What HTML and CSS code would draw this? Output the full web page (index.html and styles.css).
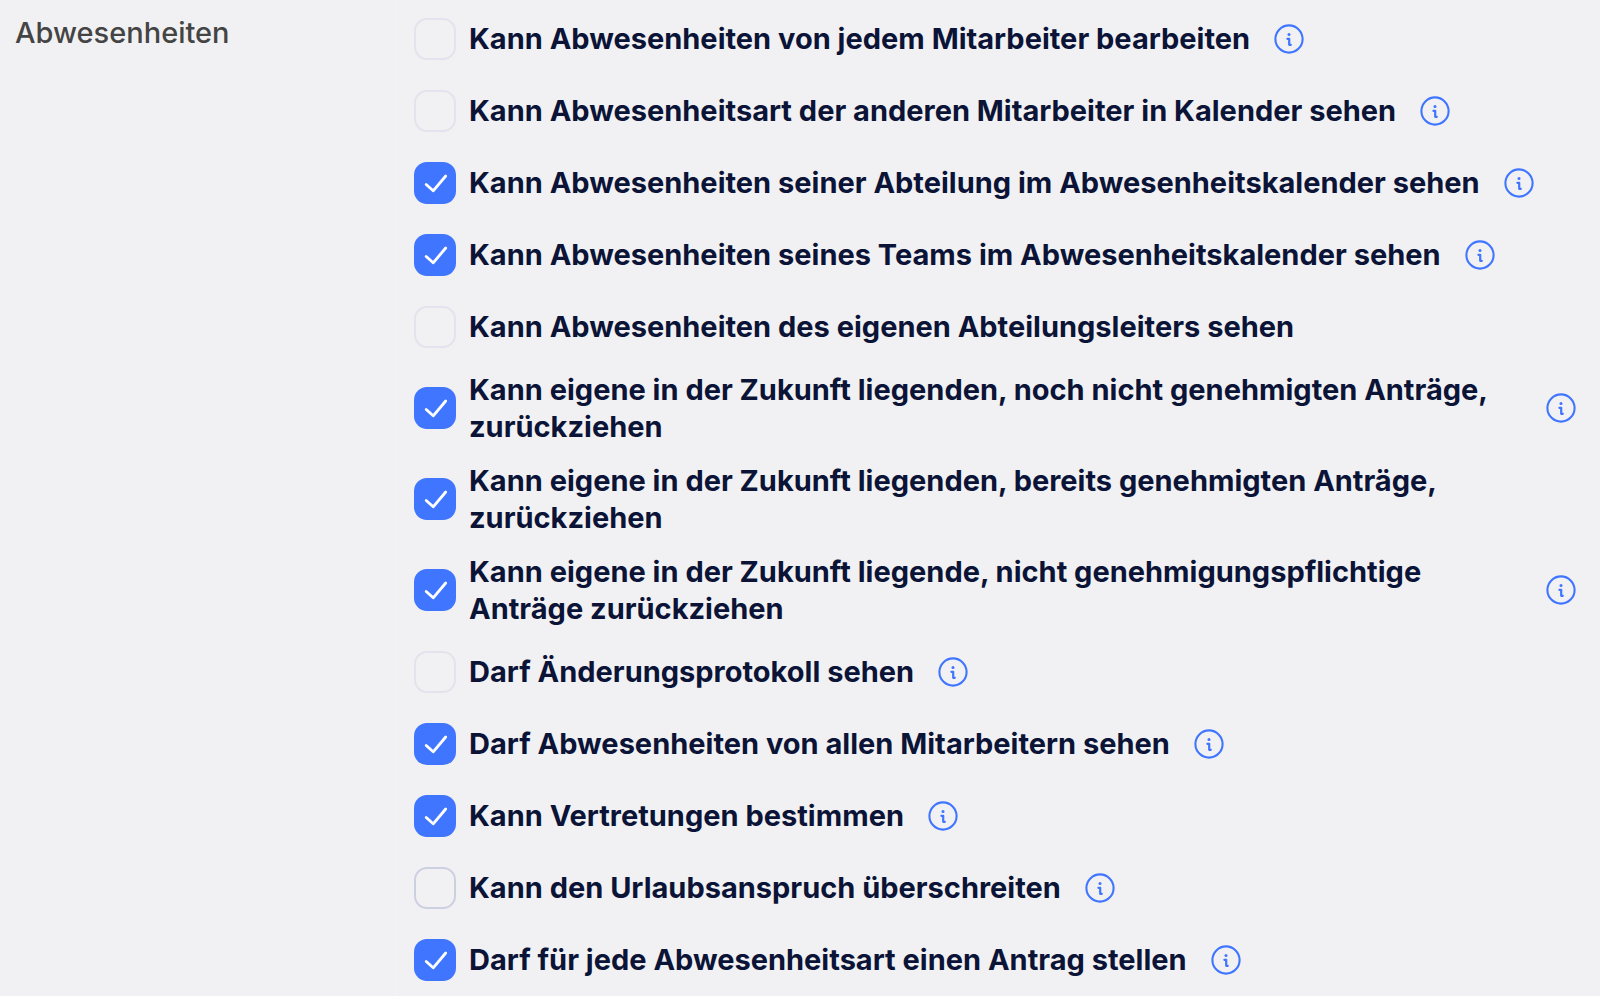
FILE: index.html
```html
<!DOCTYPE html>
<html lang="de">
<head>
	<meta charset="utf-8">
	<title>Abwesenheiten</title>
	<link rel="stylesheet" href="styles.css">
</head>
<body>
	<!-- Icon, wird von allen Info-Buttons verwendet -->
	<svg class="sprite" aria-hidden="true">
		<symbol id="info" viewBox="0 0 30 30">
			<circle cx="15" cy="15" r="13.6" fill="none" stroke="currentColor" stroke-width="2.1"/>
			<circle cx="15" cy="10.6" r="1.5" fill="currentColor"/>
			<path d="M13.4 14.8h1.8v6h1.6" fill="none" stroke="currentColor" stroke-width="2.2" stroke-linecap="round" stroke-linejoin="round"/>
		</symbol>
	</svg>

	<div class="permissions">
		<div class="group-name">Abwesenheiten</div>
		<div class="list">
			<div class="row">
				<input type="checkbox" id="p1">
				<label for="p1">Kann Abwesenheiten von jedem Mitarbeiter bearbeiten</label>
				<button type="button" class="info" aria-label="Info"><svg><use href="#info"/></svg></button>
			</div>
			<div class="row">
				<input type="checkbox" id="p2">
				<label for="p2">Kann Abwesenheitsart der anderen Mitarbeiter in Kalender sehen</label>
				<button type="button" class="info" aria-label="Info"><svg><use href="#info"/></svg></button>
			</div>
			<div class="row">
				<input type="checkbox" id="p3" checked>
				<label for="p3">Kann Abwesenheiten seiner Abteilung im Abwesenheitskalender sehen</label>
				<button type="button" class="info" aria-label="Info"><svg><use href="#info"/></svg></button>
			</div>
			<div class="row">
				<input type="checkbox" id="p4" checked>
				<label for="p4">Kann Abwesenheiten seines Teams im Abwesenheitskalender sehen</label>
				<button type="button" class="info" aria-label="Info"><svg><use href="#info"/></svg></button>
			</div>
			<div class="row">
				<input type="checkbox" id="p5">
				<label for="p5">Kann Abwesenheiten des eigenen Abteilungsleiters sehen</label>
			</div>
			<div class="row">
				<input type="checkbox" id="p6" checked>
				<label for="p6">Kann eigene in der Zukunft liegenden, noch nicht genehmigten Anträge, zurückziehen</label>
				<button type="button" class="info" aria-label="Info"><svg><use href="#info"/></svg></button>
			</div>
			<div class="row">
				<input type="checkbox" id="p7" checked>
				<label for="p7">Kann eigene in der Zukunft liegenden, bereits genehmigten Anträge, zurückziehen</label>
			</div>
			<div class="row">
				<input type="checkbox" id="p8" checked>
				<label for="p8">Kann eigene in der Zukunft liegende, nicht genehmigungspflichtige Anträge zurückziehen</label>
				<button type="button" class="info" aria-label="Info"><svg><use href="#info"/></svg></button>
			</div>
			<div class="row">
				<input type="checkbox" id="p9">
				<label for="p9">Darf Änderungsprotokoll sehen</label>
				<button type="button" class="info" aria-label="Info"><svg><use href="#info"/></svg></button>
			</div>
			<div class="row">
				<input type="checkbox" id="p10" checked>
				<label for="p10">Darf Abwesenheiten von allen Mitarbeitern sehen</label>
				<button type="button" class="info" aria-label="Info"><svg><use href="#info"/></svg></button>
			</div>
			<div class="row">
				<input type="checkbox" id="p11" checked>
				<label for="p11">Kann Vertretungen bestimmen</label>
				<button type="button" class="info" aria-label="Info"><svg><use href="#info"/></svg></button>
			</div>
			<div class="row">
				<input type="checkbox" id="p12" class="active">
				<label for="p12">Kann den Urlaubsanspruch überschreiten</label>
				<button type="button" class="info" aria-label="Info"><svg><use href="#info"/></svg></button>
			</div>
			<div class="row">
				<input type="checkbox" id="p13" checked>
				<label for="p13">Darf für jede Abwesenheitsart einen Antrag stellen</label>
				<button type="button" class="info" aria-label="Info"><svg><use href="#info"/></svg></button>
			</div>
		</div>
	</div>
</body>
</html>
```

FILE: styles.css
```css
*{
	margin: 0;
	padding: 0;
	box-sizing: border-box;
}
body{
	background: #f1f1f3;
	font-family: Inter, "Liberation Sans", sans-serif;
	font-size: 29px;
	line-height: 37px;
}
.sprite{
	display: none;
}

.permissions{
	display: grid;
	grid-template-columns: 396px 1fr;
}
.group-name{
	padding: 14px 15px;
	color: #444;
	font-weight: 500;
	border-right: 1px solid #f4f4f6;
}
.list{
	padding: 2px 24px 0 18px;
}

.row{
	display: flex;
	align-items: center;
	min-height: 72px;
	padding: 9px 0 8px;
}
.row label{
	margin-left: 13px;
	color: #0b1437;
	font-weight: 700;
	cursor: pointer;
}

.row input{
	flex: none;
	width: 42px;
	height: 42px;
	border: 2px solid #e2e3ed;
	border-radius: 13px;
	-webkit-appearance: none;
	appearance: none;
	cursor: pointer;
}
.row input.active{
	border-color: #cdd0e0;
}
.row input:checked{
	border: none;
	background: #3f75ff url("data:image/svg+xml,%3Csvg xmlns='http://www.w3.org/2000/svg' viewBox='0 0 42 42'%3E%3Cpath d='M12.2 22.5l7 6.3 12.5-14.8' fill='none' stroke='%23fff' stroke-width='2.8' stroke-linecap='round' stroke-linejoin='round'/%3E%3C/svg%3E") center / 42px 42px no-repeat;
}

.info{
	flex: none;
	width: 30px;
	height: 30px;
	margin-left: 24px;
	border: none;
	background: none;
	color: #3f75ff;
	cursor: pointer;
}
.info svg{
	display: block;
	width: 30px;
	height: 30px;
}
```
